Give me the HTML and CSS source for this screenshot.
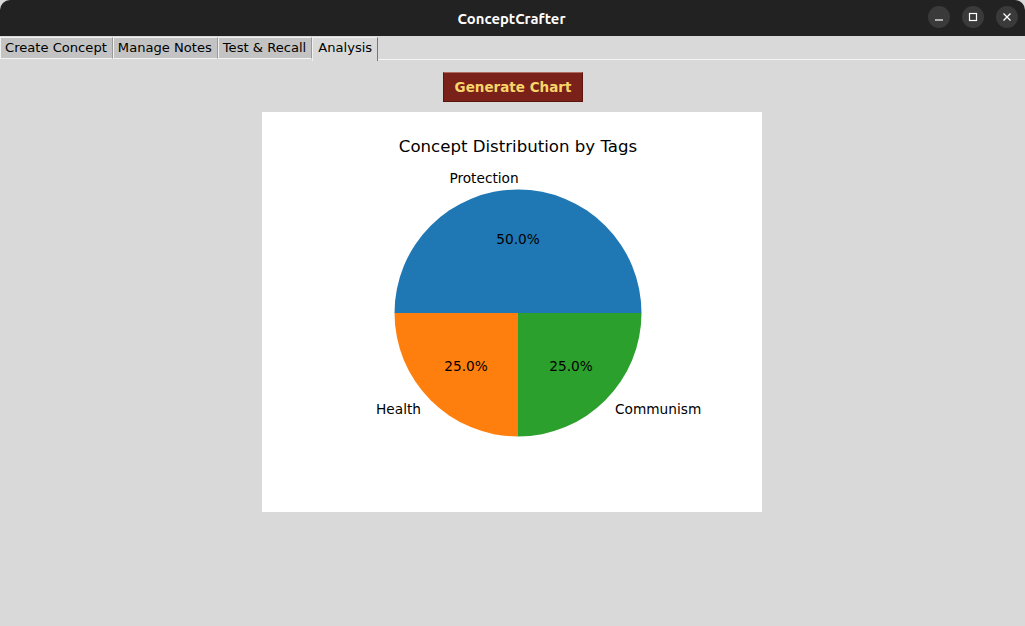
FILE: index.html
```html
<!DOCTYPE html>
<html>
<head>
<meta charset="utf-8">
<link rel="stylesheet" href="styles.css">
</head>
<body>
<div class="window">
  <header class="titlebar">
    <div class="title">ConceptCrafter</div>
    <div class="controls">
      <span class="ctl"><svg width="22" height="22" viewBox="0 0 22 22"><line x1="7" y1="14" x2="15" y2="14" stroke="#fff" stroke-width="1.2"/></svg></span>
      <span class="ctl"><svg width="22" height="22" viewBox="0 0 22 22"><rect x="7.5" y="7.5" width="7" height="7" fill="none" stroke="#fff" stroke-width="1.2"/></svg></span>
      <span class="ctl"><svg width="22" height="22" viewBox="0 0 22 22"><path d="M7.5 7.5 L14.5 14.5 M14.5 7.5 L7.5 14.5" stroke="#fff" stroke-width="1.3"/></svg></span>
    </div>
  </header>
  <nav class="tabs">
    <div class="tab">Create Concept</div>
    <div class="tab">Manage Notes</div>
    <div class="tab">Test &amp; Recall</div>
    <div class="tab active">Analysis</div>
    <div class="tab-fill"></div>
  </nav>
  <main class="content">
    <button class="gen-btn">Generate Chart</button>
    <div class="chart">
      <svg width="500" height="400" viewBox="0 0 500 400">
        <text class="ttl" x="256" y="40" text-anchor="middle">Concept Distribution by Tags</text>
        <path d="M132.5 201 A123.5 123.5 0 0 1 379.5 201 Z" fill="#1f77b4"/>
        <path d="M256 201 L132.5 201 A123.5 123.5 0 0 0 256 324.5 Z" fill="#ff7f0e"/>
        <path d="M256 201 L256 324.5 A123.5 123.5 0 0 0 379.5 201 Z" fill="#2ca02c"/>
        <text class="lbl" x="222" y="71" text-anchor="middle">Protection</text>
        <text class="lbl" x="256" y="132" text-anchor="middle">50.0%</text>
        <text class="lbl" x="204" y="259" text-anchor="middle">25.0%</text>
        <text class="lbl" x="309" y="259" text-anchor="middle">25.0%</text>
        <text class="lbl" x="159" y="302" text-anchor="end">Health</text>
        <text class="lbl" x="353" y="302" text-anchor="start">Communism</text>
      </svg>
    </div>
  </main>
</div>
</body>
</html>
```
FILE: styles.css
```css
html, body {
  margin: 0;
  padding: 0;
  background: #d9d9d9;
}
.window {
  width: 1025px;
  height: 626px;
  display: flex;
  flex-direction: column;
  background: #d9d9d9;
  overflow: hidden;
}
.titlebar {
  height: 36px;
  background: #222222;
  border-radius: 10px 10px 0 0;
  display: flex;
  align-items: center;
  justify-content: center;
  position: relative;
  flex-shrink: 0;
}
.title {
  color: #ffffff;
  font-family: "Ubuntu", "Open Sans", "DejaVu Sans", sans-serif;
  font-weight: bold;
  font-size: 14.8px;
  margin-left: -2px;
}
.controls {
  position: absolute;
  right: 7px;
  top: 6px;
  display: flex;
  gap: 12px;
}
.ctl {
  width: 22px;
  height: 22px;
  border-radius: 50%;
  background: #3a3a3a;
  display: block;
}
.ctl svg { display: block; }
.tabs {
  display: flex;
  align-items: flex-start;
  height: 25px;
  padding-top: 1px;
  box-sizing: border-box;
  flex-shrink: 0;
  font-family: "DejaVu Sans", sans-serif;
  font-size: 13.1px;
}
.tab {
  height: 20px;
  line-height: 20px;
  padding: 0 5px 0 4px;
  background: #c3c3c3;
  color: #000;
  border: 1px solid #9a9a9a;
  border-top-color: #f0f0f0;
  border-left-color: #f0f0f0;
  border-bottom: 1px solid #f4f4f4;
}
.tab.active {
  background: #d9d9d9;
  height: 23px;
  line-height: 20px;
  padding: 0 5px;
  border-bottom: none;
  border-right: 1px solid #777;
}
.tab-fill {
  flex: 1;
  align-self: stretch;
  border-bottom: 1px solid #f4f4f4;
  height: 22px;
}
.content {
  flex: 1;
  display: flex;
  flex-direction: column;
  align-items: center;
  padding-top: 11px;
}
.gen-btn {
  width: 140px;
  height: 30px;
  background: #7a2119;
  color: #f7d56a;
  border: 1px solid #5a150f;
  border-top-color: #b06a60;
  font-family: "DejaVu Sans", sans-serif;
  font-weight: bold;
  font-size: 13.5px;
  padding: 0;
  margin-left: 1px;
}
.chart {
  margin-top: 10px;
  margin-right: 1px;
  width: 500px;
  height: 400px;
  background: #ffffff;
}
.chart svg { display: block; }
.ttl {
  font-family: "DejaVu Sans", sans-serif;
  font-size: 16.6px;
  fill: #000;
}
.lbl {
  font-family: "DejaVu Sans", sans-serif;
  font-size: 13.7px;
  fill: #000;
}
```
